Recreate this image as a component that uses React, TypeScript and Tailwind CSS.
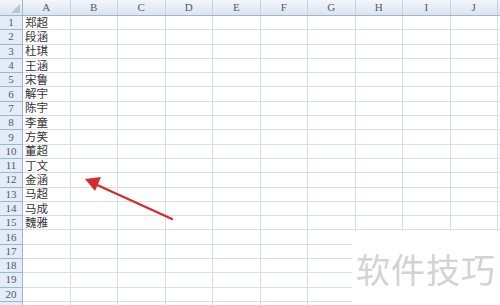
const COLS = ["A", "B", "C", "D", "E", "F", "G", "H", "I", "J"];
const NAMES = [
  "郑超", "段涵", "杜琪", "王涵", "宋鲁", "解宇", "陈宇", "李童",
  "方笑", "董超", "丁文", "金涵", "马超", "马成", "魏雅",
];

const serif = { fontFamily: '"Liberation Serif", "DejaVu Serif", serif' };
const cellFont = { fontFamily: '"Liberation Serif", "Noto Sans CJK SC", serif' };

export default function App() {
  const rows = Array.from({ length: 21 }, (_, i) => i + 1);

  return (
    <div className="relative w-[500px] h-[305px] overflow-hidden bg-white">
      {/* HEADER */}
      <div className="flex h-[16px] border-b border-[#9eb6ce] bg-gradient-to-b from-[#f2f6fb] to-[#dbe4ef]">
        <div className="relative w-[23px] shrink-0 border-r border-[#9eb6ce]">
          <div className="absolute right-[2px] bottom-[2px] w-0 h-0 border-l-[9px] border-l-transparent border-b-[9px] border-b-[#b9c6d6]" />
        </div>
        {COLS.map((c) => (
          <div
            key={c}
            style={serif}
            className="w-[47.5px] shrink-0 border-r border-[#c5d2e0] flex items-center justify-center text-[11px] leading-none text-[#4c5b73]"
          >
            {c}
          </div>
        ))}
        <div className="flex-1" />
      </div>

      {/* ROWS */}
      {rows.map((r) => (
        <div key={r} className="flex h-[14.3px]">
          <div
            style={serif}
            className="w-[23px] shrink-0 border-r border-b border-[#9eb6ce] bg-[#e4ecf7] flex items-center justify-center text-[11px] leading-none text-[#4c5b73]"
          >
            {r <= 20 ? r : ""}
          </div>
          {COLS.map((c, i) => (
            <div
              key={c}
              style={cellFont}
              className="w-[47.5px] shrink-0 border-r border-b border-[#dadfe7] flex items-center pl-[2px] text-[11.5px] leading-[12px] text-[#333]"
            >
              {i === 0 ? NAMES[r - 1] ?? "" : ""}
            </div>
          ))}
          <div className="flex-1 border-b border-[#dadfe7]" />
        </div>
      ))}

      {/* ARROW */}
      <svg className="absolute left-0 top-0" width="500" height="305">
        <line x1="172" y1="219" x2="95" y2="184" stroke="#d62b2b" strokeWidth="2.4" strokeLinecap="round" />
        <polygon points="85,179 101,177 95,191" fill="#d62b2b" />
      </svg>

      {/* WATERMARK */}
      <div className="absolute left-[352px] top-[231px] w-[148px] h-[74px] bg-white flex items-center justify-center">
        <span
          className="text-[34px] tracking-[1px] text-[#d3d3d3]"
          style={{ fontFamily: '"Noto Sans CJK SC", sans-serif' }}
        >
          软件技巧
        </span>
      </div>
    </div>
  );
}
